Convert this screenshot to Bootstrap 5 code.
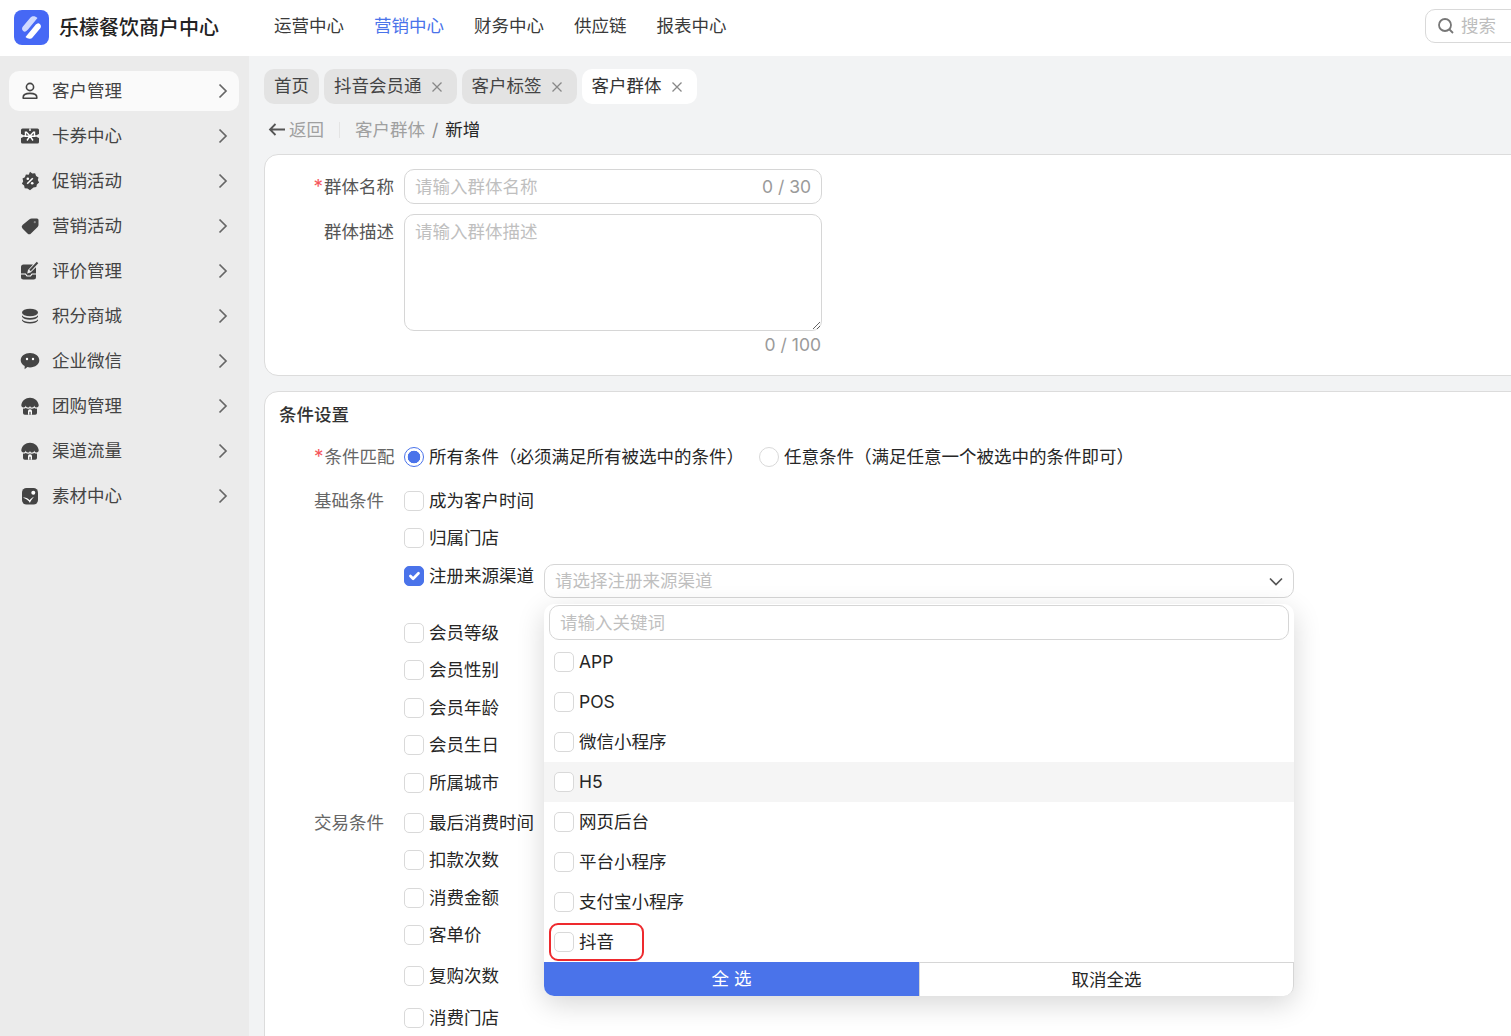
<!DOCTYPE html>
<html lang="zh-CN">
<head>
<meta charset="utf-8">
<title>客户群体</title>
<link href="https://cdn.jsdelivr.net/npm/bootstrap@5.3.0/dist/css/bootstrap.min.css" rel="stylesheet">
<style>
html,body{height:1036px;overflow:hidden}
body{font-family:Inter,"Noto Sans CJK SC",sans-serif;font-size:17.5px;color:#262626;background:#f2f3f4}
.top-bar{height:56px;background:#fff}
.logo-box{margin-left:14px;width:35px;height:35px;margin-right:10px;margin-bottom:2px}
.app-name{font-size:20px;font-weight:500;color:#222;width:160px;white-space:nowrap}
.top-links{margin-left:55px;gap:30px;margin-bottom:4px}
.top-links .nav-link{padding:0;color:#3a3a3a;font-size:17.5px}
.top-links .nav-link.active{color:#4a73ea}
.search-pill{position:relative;left:1px;width:100px;height:34px;border:1px solid #d9d9d9;border-radius:10px;color:#bdbdbd;margin-left:auto;margin-right:-13px;margin-bottom:4px;padding-left:11px;gap:6px}
.shell{height:980px}
.side-col{width:249px;background:#ebebeb;padding:15px 10px 0 9px;flex:none}
.side-link{height:40px;margin-bottom:5px;padding:0 11px 0 11px;border-radius:10px;color:#444;gap:12px}
.side-link:hover{color:#444}
.side-link.active{background:#fafafa;color:#444}
.side-link .txt{flex:1}
.main-col{flex:1;min-width:0;padding:13px 0 0 15px}
.tab-pill{height:35px;border-radius:10px;background:#e3e3e3;padding:0 14px 0 10px;color:#444;gap:9px}
.tab-pill.plain{padding-right:10px}
.tab-pill.current{background:#fff;color:#333}
.tabs-row{gap:5px}
.back-row{height:26px;margin-top:13px;margin-left:4px}
.back-link{color:#a0a0a0;gap:3px}
.vrule{width:1px;height:16px;background:#e4e4e4;margin:0 15px}
.back-row .breadcrumb{margin:0;--bs-breadcrumb-divider-color:#8c8c8c;--bs-breadcrumb-item-padding-x:7px}
.back-row .breadcrumb-item{color:#a0a0a0}
.back-row .breadcrumb-item.active{color:#262626}
.panel{margin-right:-20px;border:1px solid #dcdcdc;border-radius:14px;background:#fff}
.panel-a{margin-top:11px;height:222px;padding:14px 0 0 14px}
.panel-b{margin-top:15px;height:700px;padding:11px 0 0 14px}
.f-row-gap{margin-bottom:10px}
.f-label{width:115px;margin-right:10px;text-align:right;color:#555;height:35px;line-height:35px;flex:none}
.req,.star{color:#f5565c;font-size:19px;margin-right:1px;line-height:1}
.f-box{position:relative;width:418px}
.form-control.soft{font-size:17.5px;border:1px solid #d6d6d6;border-radius:10px;padding:0 10px;color:#333;box-shadow:none}
.form-control.soft::placeholder{color:#bfbfbf}
.in-35{height:35px}
.ta-117{height:117px;min-height:117px;padding-top:5px!important;line-height:24px;resize:vertical}
.cnt{position:absolute;right:11px;top:0;line-height:35px;color:#9a9a9a}
.cnt-b{width:418px;height:28px;line-height:28px;text-align:right;color:#9a9a9a;padding-right:1px}
.sec-title{font-weight:500;height:24px;line-height:24px;font-size:17.5px;color:#333;margin-bottom:11px}
.line{min-height:37.5px}
.group-label{width:125px;padding-left:35px;flex:none;color:#666;height:37.5px;line-height:37.5px;white-space:nowrap}
.opt{gap:5px;height:37.5px;margin:0}
.opt .form-check-input{margin:0;width:20px;height:20px;border:1px solid #d9d9d9;flex:none;box-shadow:none}
.opt .form-check-input[type=checkbox]{border-radius:5px}
.opt .form-check-input:checked{background-color:#4a73ea;border-color:#4a73ea}
.opt .form-check-input[type=radio]:checked{background-color:#fff;border:1px solid #4a73ea;background-image:radial-gradient(circle,#4a73ea 0,#4a73ea 6px,transparent 6.6px)}
.radio-line{margin-bottom:6.5px}
.radio-gap{margin-left:15px}
.select-wrap{position:relative;width:750px;margin:7px 0 16px 10px}
.select-box{height:34px;border:1px solid #d6d6d6;border-radius:10px;color:#bfbfbf;padding:0 10px}
.drop{position:absolute;left:0;top:40px;width:750px;height:392px;background:#fff;border-radius:10px;box-shadow:0 8px 28px rgba(0,0,0,.16);z-index:5}
.drop-search{margin:1px 5px 2px;width:740px;display:block}
.drop-item{height:40px;padding:0 10px;gap:5px}
.drop-item.hov{background:#f5f5f5}
.drop-item .form-check-input{margin:0;width:20px;height:20px;border:1px solid #d9d9d9;border-radius:5px;box-shadow:none;flex:none}
.drop-foot{height:34px}
.btn-all,.btn-none{width:375px;flex:none;height:34px;border-radius:0;font-size:17.5px;padding:0;line-height:32px}
.btn-all{background:#4a73ea;border:none;color:#fff;border-bottom-left-radius:10px}
.btn-all:hover{background:#4a73ea;color:#fff}
.btn-none{background:#fff;border:1px solid #d6d6d6;border-bottom:none;color:#262626;border-bottom-right-radius:10px}
.mark-box{position:absolute;left:5px;top:319px;width:95px;height:38px;border:2.5px solid #ee2a2e;border-radius:9px;pointer-events:none}
.g2{margin-top:2.5px}
.mt-3p{margin-top:3.5px}
.mt-4p{margin-top:4.5px}
.ico{flex:none;color:#444}
</style>
</head>
<body>
<header class="top-bar d-flex align-items-center">
  <svg class="logo-box" viewBox="0 0 35 35"><rect width="35" height="35" rx="8" fill="#4668f5"/><path d="M8.700 16.800L16.500 7.600c1.800-2 4.500-1.900 7 .3L14 19.500c-1.500 1.700-3.200 3-4.800 1.600-1.500-1.300-1.400-3-.5-4.300z" fill="#cfd9ff"/><path transform="rotate(180 17.500 17.500)" d="M8.700 16.800L16.500 7.600c1.800-2 4.500-1.900 7 .3L14 19.500c-1.500 1.700-3.200 3-4.800 1.600-1.500-1.300-1.400-3-.5-4.300z" fill="#fff"/></svg>
  <div class="app-name">乐檬餐饮商户中心</div>
  <nav class="nav top-links">
    <a class="nav-link" href="#">运营中心</a>
    <a class="nav-link active" href="#">营销中心</a>
    <a class="nav-link" href="#">财务中心</a>
    <a class="nav-link" href="#">供应链</a>
    <a class="nav-link" href="#">报表中心</a>
  </nav>
  <div class="search-pill d-flex align-items-center">
    <svg width="18" height="18" viewBox="0 0 18 18" fill="none" stroke="#777" stroke-width="1.800"><circle cx="8" cy="8" r="6"/><path d="M12.500 12.500l3.500 3.500"/></svg>
    <span>搜索</span>
  </div>
</header>
<div class="shell d-flex">
  <aside class="side-col">
    <nav class="nav flex-column">
      <a class="nav-link side-link active d-flex align-items-center" href="#">
        <svg class="ico" width="20" height="20" viewBox="0 0 20 20" fill="none" stroke="currentColor" stroke-width="1.600"><circle cx="10" cy="6" r="3.600"/><path d="M3.200 17.200v-1c0-2.500 2.800-3.800 6.800-3.800s6.800 1.300 6.800 3.800v1z" stroke-linejoin="round"/></svg>
        <span class="txt">客户管理</span>
        <svg width="10" height="16" viewBox="0 0 10 16" fill="none" stroke="#666" stroke-width="1.700"><path d="M1.500 1.500L8 8l-6.500 6.500"/></svg>
      </a>
      <a class="nav-link side-link d-flex align-items-center" href="#">
        <svg class="ico" width="20" height="20" viewBox="0 0 20 20"><path fill="currentColor" d="M2.500 2.500h15A1.500 1.500 0 0 1 19 4v4a2 2 0 0 0 0 4v4a1.500 1.500 0 0 1-1.500 1.500h-15A1.500 1.500 0 0 1 1 16v-4a2 2 0 0 0 0-4V4a1.500 1.500 0 0 1 1.500-1.500z"/><path fill="none" stroke="#fff" stroke-width="1.400" d="M10 10L6.500 6.300h-1v3.900zM10 10l3.500-3.700h1v3.900zM10 10l-3 4.500M10 10l3 4.500M1.500 10H5M15 10h3.500M10 2.500V5"/></svg>
        <span class="txt">卡券中心</span>
        <svg width="10" height="16" viewBox="0 0 10 16" fill="none" stroke="#666" stroke-width="1.700"><path d="M1.500 1.500L8 8l-6.500 6.500"/></svg>
      </a>
      <a class="nav-link side-link d-flex align-items-center" href="#">
        <svg class="ico" width="20" height="20" viewBox="0 0 20 20"><path fill="currentColor" d="M10 .8l2.300 1.700 2.800-.2 1 2.700 2.400 1.400-.7 2.700 1.300 2.500-2.200 1.800-.6 2.700-2.800.3L10 19.200l-2.500-1.600-2.800-.3-.6-2.700L1.900 12.800l1.300-2.500-.7-2.700L4.900 6.200l1-2.700 2.800.2z"/><path stroke="#fff" stroke-width="1.600" d="M12.800 7.200l-5.600 5.600"/><circle cx="7.800" cy="7.800" r="1.300" fill="#fff"/><circle cx="12.200" cy="12.200" r="1.300" fill="#fff"/></svg>
        <span class="txt">促销活动</span>
        <svg width="10" height="16" viewBox="0 0 10 16" fill="none" stroke="#666" stroke-width="1.700"><path d="M1.500 1.500L8 8l-6.500 6.500"/></svg>
      </a>
      <a class="nav-link side-link d-flex align-items-center" href="#">
        <svg class="ico" width="20" height="20" viewBox="0 0 20 20"><path fill="currentColor" d="M12 2.500h5A1.500 1.500 0 0 1 18.500 4v5a3 3 0 0 1-.9 2L11 17.500a2.500 2.500 0 0 1-3.500 0l-5-5a2.500 2.500 0 0 1 0-3.500L9.200 3.500A4 4 0 0 1 12 2.500z"/><circle cx="14.800" cy="6.200" r="1.100" fill="#8a8a8a"/></svg>
        <span class="txt">营销活动</span>
        <svg width="10" height="16" viewBox="0 0 10 16" fill="none" stroke="#666" stroke-width="1.700"><path d="M1.500 1.500L8 8l-6.500 6.500"/></svg>
      </a>
      <a class="nav-link side-link d-flex align-items-center" href="#">
        <svg class="ico" width="20" height="20" viewBox="0 0 20 20"><path fill="currentColor" d="M3.500 3.500H13L8 9l-.8 3.400L10.600 11.600 16 6.200V16a2.500 2.500 0 0 1-2.500 2.500h-10A2.500 2.500 0 0 1 1 16V6a2.500 2.500 0 0 1 2.500-2.500z"/><path stroke="currentColor" stroke-width="2" d="M10 9.500L17.500 1.500"/><path stroke="#fff" fill="none" stroke-width="1.200" d="M1 13h4.500l1.500 2h3.500l1.500-2H16"/></svg>
        <span class="txt">评价管理</span>
        <svg width="10" height="16" viewBox="0 0 10 16" fill="none" stroke="#666" stroke-width="1.700"><path d="M1.500 1.500L8 8l-6.500 6.500"/></svg>
      </a>
      <a class="nav-link side-link d-flex align-items-center" href="#">
        <svg class="ico" width="20" height="20" viewBox="0 0 20 20" fill="currentColor"><ellipse cx="10" cy="6.500" rx="8" ry="3.800"/><path d="M2 9.200c1.200 1.800 4 2.800 8 2.800s6.800-1 8-2.800v1.600c-1 2-4 3-8 3s-7-1-8-3zM2 13.200c1.200 1.800 4 2.800 8 2.800s6.800-1 8-2.800v1.400c-1 2-4 3-8 3s-7-1-8-3z"/></svg>
        <span class="txt">积分商城</span>
        <svg width="10" height="16" viewBox="0 0 10 16" fill="none" stroke="#666" stroke-width="1.700"><path d="M1.500 1.500L8 8l-6.500 6.500"/></svg>
      </a>
      <a class="nav-link side-link d-flex align-items-center" href="#">
        <svg class="ico" width="20" height="20" viewBox="0 0 20 20"><path fill="currentColor" d="M10 2c5 0 9.300 3 9.300 7.300 0 4-4 7.100-9.300 7.100-.9 0-1.800-.1-2.600-.3L4.600 18.300l.1-3.200C2.300 13.800.7 11.700.7 9.300.7 5 5 2 10 2z"/><circle cx="7" cy="8" r="1.200" fill="#fff"/><circle cx="13" cy="8" r="1.200" fill="#fff"/></svg>
        <span class="txt">企业微信</span>
        <svg width="10" height="16" viewBox="0 0 10 16" fill="none" stroke="#666" stroke-width="1.700"><path d="M1.500 1.500L8 8l-6.500 6.500"/></svg>
      </a>
      <a class="nav-link side-link d-flex align-items-center" href="#">
        <svg class="ico" width="20" height="20" viewBox="0 0 20 20"><path fill="currentColor" d="M10 1.800c4.500 0 8 3 8.700 7.200.2 1.500-1 2.500-2.200 2.500-1.200 0-2-.8-2.200-2-.2 1.200-1.100 2-2.200 2-.9 0-1.600-.5-2.100-1.500-.5 1-1.200 1.500-2.100 1.500-1.100 0-2-.8-2.200-2-.2 1.200-1 2-2.200 2-1.200 0-2.400-1-2.200-2.500C2 4.800 5.500 1.800 10 1.800z"/><path fill="currentColor" d="M3 12.600c1 .2 2 0 2.700-.6 1.300 1 3 1 4.300.2 1.300.8 3 .8 4.300-.2.700.6 1.700.8 2.700.6V17a1.800 1.800 0 0 1-1.800 1.800H4.800A1.800 1.800 0 0 1 3 17z"/><path fill="#fff" d="M8 18.800V15.200a2 2 0 0 1 4 0v3.600z"/><path fill="currentColor" d="M9.400 15.800h1.200v3H9.400z"/></svg>
        <span class="txt">团购管理</span>
        <svg width="10" height="16" viewBox="0 0 10 16" fill="none" stroke="#666" stroke-width="1.700"><path d="M1.500 1.500L8 8l-6.500 6.500"/></svg>
      </a>
      <a class="nav-link side-link d-flex align-items-center" href="#">
        <svg class="ico" width="20" height="20" viewBox="0 0 20 20"><path fill="currentColor" d="M10 1.800c4.500 0 8 3 8.700 7.200.2 1.500-1 2.500-2.200 2.500-1.200 0-2-.8-2.200-2-.2 1.200-1.100 2-2.200 2-.9 0-1.600-.5-2.100-1.500-.5 1-1.200 1.500-2.100 1.500-1.100 0-2-.8-2.200-2-.2 1.200-1 2-2.200 2-1.200 0-2.400-1-2.200-2.500C2 4.800 5.500 1.800 10 1.800z"/><path fill="currentColor" d="M3 12.600c1 .2 2 0 2.700-.6 1.300 1 3 1 4.300.2 1.300.8 3 .8 4.300-.2.700.6 1.700.8 2.700.6V17a1.800 1.800 0 0 1-1.800 1.800H4.800A1.800 1.800 0 0 1 3 17z"/><path fill="#fff" d="M8 18.800V15.200a2 2 0 0 1 4 0v3.600z"/><path fill="currentColor" d="M9.400 15.800h1.200v3H9.400z"/></svg>
        <span class="txt">渠道流量</span>
        <svg width="10" height="16" viewBox="0 0 10 16" fill="none" stroke="#666" stroke-width="1.700"><path d="M1.500 1.500L8 8l-6.500 6.500"/></svg>
      </a>
      <a class="nav-link side-link d-flex align-items-center" href="#">
        <svg class="ico" width="20" height="20" viewBox="0 0 20 20"><rect x="2" y="2" width="16" height="16.500" rx="4.500" fill="currentColor"/><path fill="#fff" d="M3 11.800c2.500-.6 4.600.3 6.500 2.400 1.500-1.700 3.300-3 4.500-3.400-1.500 1.600-4 5.200-4 6.200-1-2.500-4.500-4.600-7-5.200z"/><circle cx="13.300" cy="6.800" r="2" fill="#fff"/></svg>
        <span class="txt">素材中心</span>
        <svg width="10" height="16" viewBox="0 0 10 16" fill="none" stroke="#666" stroke-width="1.700"><path d="M1.500 1.500L8 8l-6.500 6.500"/></svg>
      </a>
    </nav>
  </aside>
  <main class="main-col">
    <div class="tabs-row d-flex">
      <div class="tab-pill plain d-flex align-items-center">首页</div>
      <div class="tab-pill d-flex align-items-center">抖音会员通<svg width="12" height="12" viewBox="0 0 12 12" stroke="#888" stroke-width="1.300"><path d="M1.500 1.500l9 9M10.500 1.500l-9 9"/></svg></div>
      <div class="tab-pill d-flex align-items-center">客户标签<svg width="12" height="12" viewBox="0 0 12 12" stroke="#888" stroke-width="1.300"><path d="M1.500 1.500l9 9M10.500 1.500l-9 9"/></svg></div>
      <div class="tab-pill current d-flex align-items-center">客户群体<svg width="12" height="12" viewBox="0 0 12 12" stroke="#888" stroke-width="1.300"><path d="M1.500 1.500l9 9M10.500 1.500l-9 9"/></svg></div>
    </div>
    <div class="back-row d-flex align-items-center">
      <span class="back-link d-flex align-items-center"><svg width="18" height="14" viewBox="0 0 18 14" fill="none" stroke="#555" stroke-width="1.800"><path d="M17 6.500H2M7.500 1L2 6.500 7.500 12"/></svg>返回</span>
      <span class="vrule"></span>
      <ol class="breadcrumb">
        <li class="breadcrumb-item">客户群体</li>
        <li class="breadcrumb-item active">新增</li>
      </ol>
    </div>
    <section class="card panel panel-a">
      <div class="d-flex f-row-gap">
        <div class="f-label"><span class="req">*</span>群体名称</div>
        <div class="f-box">
          <input class="form-control soft in-35" placeholder="请输入群体名称">
          <span class="cnt">0 / 30</span>
        </div>
      </div>
      <div class="d-flex">
        <div class="f-label">群体描述</div>
        <div class="f-box"><textarea class="form-control soft ta-117" placeholder="请输入群体描述"></textarea></div>
      </div>
      <div class="d-flex">
        <div class="f-label"></div>
        <div class="cnt-b">0 / 100</div>
      </div>
    </section>
    <section class="card panel panel-b">
      <div class="sec-title">条件设置</div>
      <div class="d-flex line radio-line">
        <div class="group-label"><span class="star">*</span>条件匹配</div>
        <label class="opt d-flex align-items-center"><input class="form-check-input" type="radio" name="m" checked>所有条件（必须满足所有被选中的条件）</label>
        <label class="opt radio-gap d-flex align-items-center"><input class="form-check-input" type="radio" name="m">任意条件（满足任意一个被选中的条件即可）</label>
      </div>

      <div class="d-flex line"><div class="group-label">基础条件</div><label class="opt d-flex align-items-center"><input class="form-check-input" type="checkbox">成为客户时间</label></div>
      <div class="d-flex line"><div class="group-label"></div><label class="opt d-flex align-items-center"><input class="form-check-input" type="checkbox">归属门店</label></div>
      <div class="d-flex line align-items-start">
        <div class="group-label"></div>
        <label class="opt d-flex align-items-center"><input class="form-check-input" type="checkbox" checked>注册来源渠道</label>
        <div class="select-wrap">
          <div class="select-box d-flex align-items-center justify-content-between">
            <span>请选择注册来源渠道</span>
            <svg width="14" height="9" viewBox="0 0 14 9" fill="none" stroke="#555" stroke-width="1.700"><path d="M1 1.500l6 6 6-6"/></svg>
          </div>
          <div class="drop">
            <input class="form-control soft in-35 drop-search" placeholder="请输入关键词">
            <label class="drop-item d-flex align-items-center"><input class="form-check-input" type="checkbox">APP</label>
            <label class="drop-item d-flex align-items-center"><input class="form-check-input" type="checkbox">POS</label>
            <label class="drop-item d-flex align-items-center"><input class="form-check-input" type="checkbox">微信小程序</label>
            <label class="drop-item hov d-flex align-items-center"><input class="form-check-input" type="checkbox">H5</label>
            <label class="drop-item d-flex align-items-center"><input class="form-check-input" type="checkbox">网页后台</label>
            <label class="drop-item d-flex align-items-center"><input class="form-check-input" type="checkbox">平台小程序</label>
            <label class="drop-item d-flex align-items-center"><input class="form-check-input" type="checkbox">支付宝小程序</label>
            <label class="drop-item d-flex align-items-center"><input class="form-check-input" type="checkbox">抖音</label>
            <div class="drop-foot d-flex">
              <button class="btn btn-all" type="button">全 选</button>
              <button class="btn btn-none" type="button">取消全选</button>
            </div>
            <div class="mark-box"></div>
          </div>
        </div>
      </div>
      <div class="d-flex line"><div class="group-label"></div><label class="opt d-flex align-items-center"><input class="form-check-input" type="checkbox">会员等级</label></div>
      <div class="d-flex line"><div class="group-label"></div><label class="opt d-flex align-items-center"><input class="form-check-input" type="checkbox">会员性别</label></div>
      <div class="d-flex line"><div class="group-label"></div><label class="opt d-flex align-items-center"><input class="form-check-input" type="checkbox">会员年龄</label></div>
      <div class="d-flex line"><div class="group-label"></div><label class="opt d-flex align-items-center"><input class="form-check-input" type="checkbox">会员生日</label></div>
      <div class="d-flex line"><div class="group-label"></div><label class="opt d-flex align-items-center"><input class="form-check-input" type="checkbox">所属城市</label></div>

      <div class="d-flex line g2"><div class="group-label">交易条件</div><label class="opt d-flex align-items-center"><input class="form-check-input" type="checkbox">最后消费时间</label></div>
      <div class="d-flex line"><div class="group-label"></div><label class="opt d-flex align-items-center"><input class="form-check-input" type="checkbox">扣款次数</label></div>
      <div class="d-flex line"><div class="group-label"></div><label class="opt d-flex align-items-center"><input class="form-check-input" type="checkbox">消费金额</label></div>
      <div class="d-flex line"><div class="group-label"></div><label class="opt d-flex align-items-center"><input class="form-check-input" type="checkbox">客单价</label></div>
      <div class="d-flex line mt-3p"><div class="group-label"></div><label class="opt d-flex align-items-center"><input class="form-check-input" type="checkbox">复购次数</label></div>
      <div class="d-flex line mt-4p"><div class="group-label"></div><label class="opt d-flex align-items-center"><input class="form-check-input" type="checkbox">消费门店</label></div>
    </section>
  </main>
</div>
<script src="https://cdn.jsdelivr.net/npm/bootstrap@5.3.0/dist/js/bootstrap.bundle.min.js"></script>
</body>
</html>
